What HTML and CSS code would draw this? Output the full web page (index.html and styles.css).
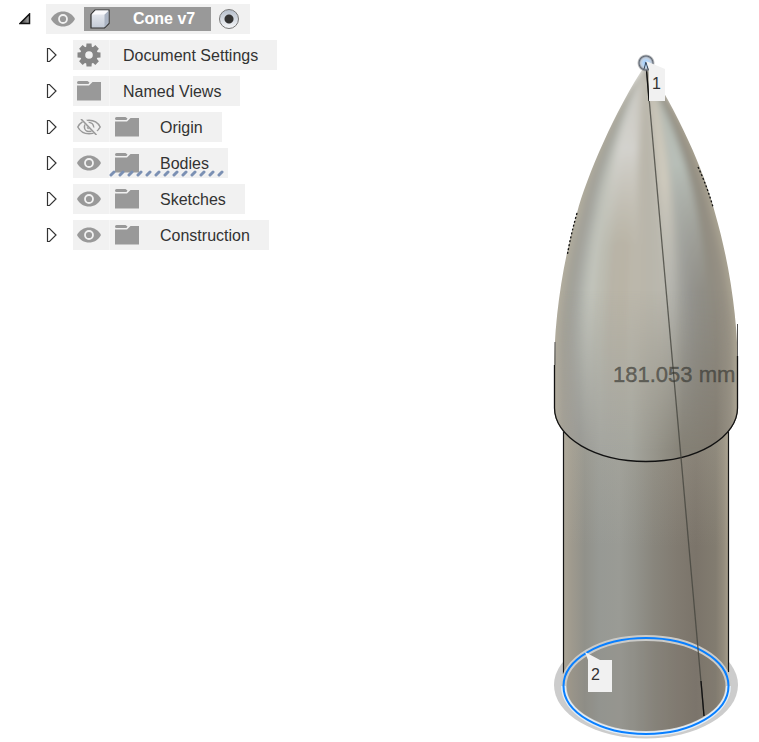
FILE: index.html
```html
<!DOCTYPE html>
<html lang="en">
<head>
<meta charset="utf-8">
<title>Cone v7</title>
<link rel="stylesheet" href="styles.css">
</head>
<body>
<svg class="sprite" width="0" height="0" aria-hidden="true">
  <symbol id="arrow" viewBox="0 0 12 16"><path d="M1.500 1.500h2L10 8l-6.500 6.500h-2z" fill="#fff" stroke="#333" stroke-width="1.200"/></symbol>
  <symbol id="eye" viewBox="0 0 24 16"><path d="M0 8C5-2 19-2 24 8 19 18 5 18 0 8Z" fill="#999"/><circle cx="12" cy="8" r="4" fill="none" stroke="#f1f1f1" stroke-width="1.800"/></symbol>
  <symbol id="eye-off" viewBox="0 0 24 16"><g fill="none" stroke="#999" stroke-width="1.500"><path d="M.8 8C5.500-1 18.500-1 23.200 8 18.500 17 5.500 17 .8 8Z"/><circle cx="12" cy="8" r="4.600"/><circle cx="12" cy="8" r="1.500"/></g><path d="M5.500 0 20 15" stroke="#f1f1f1" stroke-width="4"/><path d="M4 0l15.500 16" stroke="#999" stroke-width="1.600"/></symbol>
  <symbol id="folder" viewBox="0 0 24 20"><path d="M1.500 0h9l2 1.500-1 1.500h-10Q0 3 0 1.500 0 0 1.500 0ZM0 4.500h12L15.500 1H24v18.500H0Z" fill="#999"/></symbol>
  <symbol id="gear" viewBox="-12 -12 24 24"><g fill="#858585"><path id="teeth" d="M-2.500-11.500h5L3-6h-6ZM-2.500 11.500h5L3 6h-6ZM-11.500-2.500v5L-6 3v-6ZM11.500-2.500v5L6 3v-6Z"/><use href="#teeth" transform="rotate(45)"/></g><circle r="6.300" fill="none" stroke="#858585" stroke-width="5"/></symbol>
</svg>
<main class="workspace">
  <nav class="browser" aria-label="Browser">
    <div class="row root">
      <button class="twisty" aria-label="Collapse Cone v7"><svg width="12" height="12" viewBox="0 0 12 12"><defs><linearGradient id="corner"><stop offset="0" stop-color="#333"/><stop offset="1" stop-color="#aaa"/></linearGradient></defs><path d="M1 10.500 10.500 1v9.500Z" fill="url(#corner)" stroke="#111" stroke-width="1.500"/></svg></button>
      <div class="item">
        <button class="cell" aria-label="Toggle Cone v7"><svg width="24" height="16"><use href="#eye"/></svg></button>
        <button class="document"><svg width="20" height="20" viewBox="0 0 20 20"><defs><linearGradient id="cube" x2="0" y2="1"><stop offset="0" stop-color="#eef0f4"/><stop offset="1" stop-color="#c3cad6"/></linearGradient></defs><path d="M1 5.500 5 1h14v13.500L14.500 19H1Z" fill="url(#cube)" stroke="#333" stroke-width="1.200"/><path d="M14.500 5.500 18.500 1.500V14L14.500 18.500Z" fill="#aab3c2"/><path d="M1.500 5.500 5.500 1.500h13l-4 4Z" fill="#fafafc"/></svg><span>Cone v7</span></button>
        <input class="activate" type="radio" name="active" aria-label="Activate Cone v7">
      </div>
    </div>
    <ul class="children">
      <li class="row"><button class="twisty" aria-label="Expand Document Settings"><svg width="12" height="16"><use href="#arrow"/></svg></button><div class="item"><span class="cell"><svg width="24" height="24"><use href="#gear"/></svg></span><span class="name">Document Settings</span></div></li>
      <li class="row"><button class="twisty" aria-label="Expand Named Views"><svg width="12" height="16"><use href="#arrow"/></svg></button><div class="item"><span class="cell"><svg width="24" height="20"><use href="#folder"/></svg></span><span class="name">Named Views</span></div></li>
      <li class="row"><button class="twisty" aria-label="Expand Origin"><svg width="12" height="16"><use href="#arrow"/></svg></button><div class="item"><button class="cell" aria-label="Show Origin"><svg width="24" height="16"><use href="#eye-off"/></svg></button><span class="cell"><svg width="24" height="20"><use href="#folder"/></svg></span><span class="name">Origin</span></div></li>
      <li class="row"><button class="twisty" aria-label="Expand Bodies"><svg width="12" height="16"><use href="#arrow"/></svg></button><div class="item"><button class="cell" aria-label="Hide Bodies"><svg width="24" height="16"><use href="#eye"/></svg></button><span class="cell"><svg width="24" height="20"><use href="#folder"/></svg></span><span class="name">Bodies</span><svg class="dashes" width="116" height="8" aria-hidden="true"><path d="M2 6l3-3m6 3l3-3m6 3l3-3m6 3l3-3m6 3l3-3m6 3l3-3m6 3l3-3m6 3l3-3m6 3l3-3m6 3l3-3m6 3l3-3m6 3l3-3m6 3l3-3" fill="none" stroke="#7b90b3" stroke-width="3" stroke-linecap="round"/></svg></div></li>
      <li class="row"><button class="twisty" aria-label="Expand Sketches"><svg width="12" height="16"><use href="#arrow"/></svg></button><div class="item"><button class="cell" aria-label="Hide Sketches"><svg width="24" height="16"><use href="#eye"/></svg></button><span class="cell"><svg width="24" height="20"><use href="#folder"/></svg></span><span class="name">Sketches</span></div></li>
      <li class="row"><button class="twisty" aria-label="Expand Construction"><svg width="12" height="16"><use href="#arrow"/></svg></button><div class="item"><button class="cell" aria-label="Hide Construction"><svg width="24" height="16"><use href="#eye"/></svg></button><span class="cell"><svg width="24" height="20"><use href="#folder"/></svg></span><span class="name">Construction</span></div></li>
    </ul>
  </nav>
  <svg class="model" viewBox="540 0 219 742" role="img" aria-label="Cone model with a measured distance">
    <defs>
      <linearGradient id="tube" gradientUnits="userSpaceOnUse" x1="563" x2="729" y1="0" y2="0">
        <stop offset="0" stop-color="#aaa496"/><stop offset=".05" stop-color="#9f9a8e"/><stop offset=".13" stop-color="#91918a"/><stop offset=".22" stop-color="#979994"/><stop offset=".34" stop-color="#9a9b95"/><stop offset=".43" stop-color="#93938c"/><stop offset=".55" stop-color="#88857c"/><stop offset=".68" stop-color="#817b71"/><stop offset=".8" stop-color="#7b746a"/><stop offset=".92" stop-color="#827c70"/><stop offset=".97" stop-color="#948c7d"/><stop offset="1" stop-color="#aaa18e"/>
      </linearGradient>
      <linearGradient id="skirt" gradientUnits="userSpaceOnUse" x1="554" x2="738" y1="0" y2="0">
        <stop offset="0" stop-color="#b0ab9d"/><stop offset=".05" stop-color="#a39f95"/><stop offset=".14" stop-color="#999994"/><stop offset=".25" stop-color="#a4a59f"/><stop offset=".42" stop-color="#a5a69e"/><stop offset=".56" stop-color="#959389"/><stop offset=".7" stop-color="#848075"/><stop offset=".88" stop-color="#827c71"/><stop offset=".96" stop-color="#958f82"/><stop offset="1" stop-color="#b0a897"/>
      </linearGradient>
      <linearGradient id="fade" gradientUnits="userSpaceOnUse" x1="0" x2="0" y1="290" y2="450"><stop offset="0" stop-color="#000"/><stop offset="1" stop-color="#fff"/></linearGradient>
      <mask id="fade-in" maskUnits="userSpaceOnUse" x="540" y="270" width="219" height="200"><path d="M540 270H759V470H540Z" fill="url(#fade)"/></mask>
      <linearGradient id="tube-light" x2="0" y2="1"><stop offset="0" stop-color="#c4c0b0" stop-opacity=".28"/><stop offset=".6" stop-color="#c4c0b0" stop-opacity="0"/></linearGradient>
      <linearGradient id="silver" gradientUnits="userSpaceOnUse" x1="0" x2="0" y1="70" y2="245"><stop offset="0" stop-color="#d6d5d1" stop-opacity=".5"/><stop offset=".45" stop-color="#d6d5d1" stop-opacity=".9"/><stop offset="1" stop-color="#d0cec6" stop-opacity="0"/></linearGradient>
      <linearGradient id="sand" gradientUnits="userSpaceOnUse" x1="0" x2="0" y1="70" y2="290"><stop offset="0" stop-color="#cfc9ba"/><stop offset=".5" stop-color="#cfcabd"/><stop offset="1" stop-color="#c9c7bd" stop-opacity="0"/></linearGradient>
      <linearGradient id="sage" gradientUnits="userSpaceOnUse" x1="0" x2="0" y1="80" y2="290"><stop offset="0" stop-color="#b7bdb5"/><stop offset=".4" stop-color="#b7beb7"/><stop offset="1" stop-color="#aeb0ab" stop-opacity="0"/></linearGradient>
      <radialGradient id="point"><stop offset="0" stop-color="#8fbdf0"/><stop offset=".35" stop-color="#b7d8fa"/><stop offset=".6" stop-color="#c1cbd8"/><stop offset=".78" stop-color="#5e6671"/><stop offset="1" stop-color="#999" stop-opacity="0"/></radialGradient>
      <path id="half" d="M0 64C-30 110-58 165-69 213C-82 255-92 310-92 365V480H0Z"/>
      <clipPath id="dome"><path d="M646 64C616 108 586 178 577 213C562 265 554 320 554 375V408A92 53.500 0 0 0 738 408V375C738 320 730 265 715 213C705 172 676 108 646 64Z"/></clipPath>
      <filter id="soft" x="-20%" y="-5%" width="140%" height="110%"><feGaussianBlur stdDeviation="3.500 2"/></filter>
    </defs>
    <ellipse cx="646" cy="685" rx="92" ry="53.500" fill="#ccc"/>
    <path d="M563.500 407V686A82.500 48 0 0 0 728.500 686V407Z" fill="url(#tube)"/>
    <path d="M563.500 407H728.500V640H563.500Z" fill="url(#tube-light)"/>
    <path d="M563.500 425V674M728.500 425V672" stroke="#161616" stroke-width="1.200"/>
    <g clip-path="url(#dome)">
      <g filter="url(#soft)">
        <g transform="translate(646 0)">
          <use href="#half" transform="scale(1.150 1)" fill="#b3ae9f"/>
          <use href="#half" transform="scale(.95 1)" fill="#a3a197"/>
          <use href="#half" transform="scale(.84 1)" fill="#a5a6a0"/>
          <use href="#half" transform="scale(.76 1)" fill="#b5b8b0"/>
          <use href="#half" transform="scale(.68 1)" fill="#c2c4bb"/>
          <use href="#half" transform="scale(.58 1)" fill="#bcbcb1"/>
          <use href="#half" transform="scale(.46 1)" fill="#b8b4a7"/>
          <use href="#half" transform="scale(.34 1)" fill="#b9b4a6"/>
          <use href="#half" transform="scale(.2 1)" fill="#bcb8ac"/>
          <use href="#half" transform="scale(.1 1)" fill="#bab6aa"/>
          <use href="#half" transform="scale(-1.150 1)" fill="#aaa493"/>
          <use href="#half" transform="scale(-.95 1)" fill="#969084"/>
          <use href="#half" transform="scale(-.84 1)" fill="#908c81"/>
          <use href="#half" transform="scale(-.72 1)" fill="#908e86"/>
          <use href="#half" transform="scale(-.6 1)" fill="#93928c"/>
          <use href="#half" transform="scale(-.5 1)" fill="#9a9a95"/>
          <use href="#half" transform="scale(-.42 1)" fill="#a5a59f"/>
          <use href="#half" transform="scale(-.34 1)" fill="#b5b5af"/>
          <use href="#half" transform="scale(-.24 1)" fill="#bab8ae"/>
          <use href="#half" transform="scale(-.12 1)" fill="#b9b6ab"/>
        </g>
        <path d="M645 66C622 115 609 170 603 245H638C636 180 639 110 645 66Z" fill="url(#silver)"/>
        <path d="M656 90C682 145 700 195 707 290H678C675 200 664 130 656 90Z" fill="url(#sage)"/>
        <path d="M649 76C656 140 661 210 665 290H679C673 190 664 130 653 80Z" fill="url(#sand)"/>
      </g>
      <path d="M540 270H752V465H540Z" fill="url(#skirt)" mask="url(#fade-in)"/>
    </g>
    <path d="M554.500 365V408A91.500 53.500 0 0 0 737.500 408V356" fill="none" stroke="#111" stroke-width="1.300"/>
    <path d="M577 213Q571 234 567.500 254M698 167Q707 186 713 207" fill="none" stroke="#111" stroke-width="1.300" stroke-dasharray="2 2"/>
    <path d="M555 342V365M737.500 324V356" stroke="#555" stroke-width="1"/>
    <ellipse cx="646" cy="686" rx="82.500" ry="48" fill="#807b73" fill-opacity=".15" stroke="#cbcbc9" stroke-width="6"/>
    <path d="M563.500 686A82.500 48 0 0 0 728.500 686" fill="none" stroke="#e3edf6" stroke-width="5"/>
    <ellipse cx="646" cy="686" rx="82.500" ry="48" fill="none" stroke="#087fff" stroke-width="2"/>
    <path d="M646 64 704 716" stroke="#45453e" stroke-width="1.300" opacity=".8"/>
    <path d="M646 64 649 101M701 681 704 716" stroke="#111" stroke-width="1.300"/>
    <text class="distance" x="613" y="382" clip-path="url(#dome)">181.053 mm</text>
    <circle cx="646" cy="63" r="9" fill="url(#point)"/>
    <path d="M644 69 646 62 648 69" fill="none" stroke="#354455"/>
    <path d="M646 61 665 69V101H649V69Z" fill="#f1f1f1"/>
    <text class="tag" x="652" y="89">1</text>
    <path d="M585 652 600 660H612V692H588V660Z" fill="#f1f1f1"/>
    <text class="tag" x="591" y="680">2</text>
  </svg>
</main>
</body>
</html>
```

FILE: styles.css
```css
body {
  margin: 0;
  background: #fff;
  color: #333;
  font: 16px/20px "Liberation Sans", Arial, sans-serif;
}

button {
  border: 0;
  padding: 0;
  background: none;
  color: inherit;
  font: inherit;
}

svg { display: block; }

.sprite { position: absolute; }

.workspace {
  display: flex;
  justify-content: space-between;
  min-height: 100vh;
}

.browser { padding: 4px 0 0 19px; }

.row {
  display: flex;
  align-items: center;
  height: 30px;
}

.twisty {
  display: flex;
  width: 27px;
}

.item {
  position: relative;
  display: flex;
  align-items: center;
  height: 30px;
  background: #f1f1f1;
}

.cell {
  display: flex;
  align-items: center;
  justify-content: center;
  width: 33px;
  height: 30px;
}

.children {
  display: grid;
  gap: 6px;
  margin: 6px 0 0;
  padding: 0 0 0 27px;
  list-style: none;
}

.children .cell {
  box-sizing: border-box;
  width: 37px;
  padding-right: 4px;
  border-right: 1px solid #f6f6f6;
}

.children .cell + .cell {
  width: 34px;
  padding: 0;
  border: 0;
}

.name { padding: 1px 19px 0 13px; }

.cell + .cell + .name { padding-left: 16px; }

.document {
  display: flex;
  align-items: center;
  gap: 23px;
  height: 24px;
  margin-left: 5px;
  padding: 0 16px 0 6px;
  background: #999;
  color: #fff;
  font-weight: bold;
}

.activate {
  appearance: none;
  width: 20px;
  height: 20px;
  margin: 0 11px 0 8px;
  border: 1px solid #777;
  border-radius: 50%;
  background: radial-gradient(circle, #333 0 4px, transparent 5px), linear-gradient(#b6bfcc, #f5f6f8);
}

.dashes {
  position: absolute;
  left: 36px;
  bottom: 1px;
}

.model {
  height: 100vh;
  min-height: 480px;
}

.distance {
  font-size: 22px;
  fill: #33332e;
  fill-opacity: .6;
  stroke: #33332e;
  stroke-opacity: .5;
  stroke-width: .5px;
}

.tag {
  font-size: 16px;
  fill: #333;
}
```
